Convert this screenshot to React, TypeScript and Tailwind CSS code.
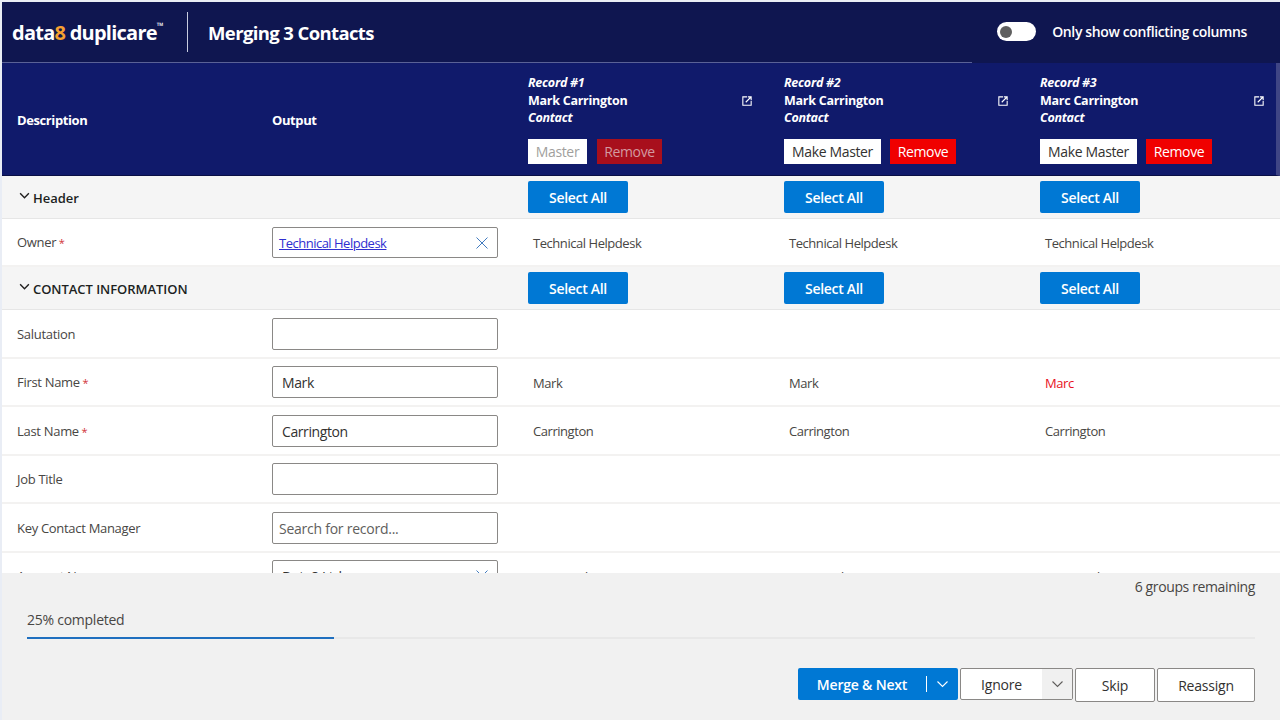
import React from "react";

const font = "font-['Open_Sans','Noto_Sans',sans-serif]";

function Chevron({ className, w = 1.1 }: { className?: string; w?: number }) {
  return (
    <svg viewBox="0 0 12 8" className={className} fill="none" stroke="currentColor" strokeWidth={w}>
      <path d="M1 1.5 L6 6.5 L11 1.5" />
    </svg>
  );
}

function ExternalIcon() {
  return (
    <svg viewBox="0 0 12 12" className="w-[10px] h-[10px] text-white" fill="none" stroke="currentColor" strokeWidth="1.3">
      <path d="M6 1 H1 V11 H11 V6" />
      <path d="M4.5 7.5 L10.5 1.5 M7 1 H11 V5" />
    </svg>
  );
}

const grid = "grid grid-cols-[256px_256px_256px_256px_1fr] pl-[14px]";

function Input({ value, placeholder, link, clear }: { value?: string; placeholder?: string; link?: boolean; clear?: boolean }) {
  return (
    <div className={`w-[226px] ${link ? "h-[31px] mt-[1px]" : "h-[32px]"} border border-[#8a8886] rounded-[2px] bg-white flex items-center justify-between pl-[6px] pr-[9px] text-[14px] text-[#323130] overflow-hidden`}>
      {link ? (
        <span className="text-[13px] text-[#2f2fd0] underline tracking-[-0.5px] mt-[2px]">{value}</span>
      ) : placeholder ? (
        <span className="text-[#605e5c] tracking-[-0.25px] mt-[1px]">{placeholder}</span>
      ) : (
        <span className="tracking-[-0.4px] pl-[3px] mt-[1px]">{value}</span>
      )}
      {clear && (
        <svg viewBox="0 0 12 12" className="w-[12px] h-[12px] text-[#2b6cb8] shrink-0" fill="none" stroke="currentColor" strokeWidth="0.9">
          <path d="M0.5 0.5 L11.5 11.5 M11.5 0.5 L0.5 11.5" />
        </svg>
      )}
    </div>
  );
}

function Row({ label, required, input, vals, h, red }: { label: string; required?: boolean; input: React.ReactNode; vals?: string[]; h: string; red?: boolean }) {
  return (
    <div className={`${grid} ${h} items-center border-b-2 border-[#f3f2f1] bg-white text-[13px] text-[#484644]`}>
      <div className="pt-[2px] pl-[1px] tracking-[-0.3px]">
        {label}
        {required && <span className="text-[11px] text-[#d13438]"> *</span>}
      </div>
      <div>{input}</div>
      {(vals ?? ["", "", ""]).map((v, i) => (
        <div key={i} className={`pl-[5px] pt-[3px] tracking-[-0.45px] ${red && i === 2 ? "text-[#e81123]" : ""}`}>
          {v}
        </div>
      ))}
    </div>
  );
}

function SelectAll() {
  return (
    <button className="w-[100px] h-[32px] rounded-[2px] bg-[#0078d4] text-white text-[14px] font-semibold tracking-[-0.3px]">Select All</button>
  );
}

function Group({ title, h }: { title: string; h: string }) {
  return (
    <div className={`${grid} ${h} items-center border-b border-[#e6e6e6] bg-[#f5f5f5]`}>
      <div className="col-span-2 flex items-center gap-[3px] pl-[3px] text-[13px] font-semibold text-[#201f1e] tracking-[-0.05px]">
        <Chevron w={1.6} className="w-[11px] h-[7px] text-[#201f1e] -mt-[3px]" />
        <span className="pt-[3px]">{title}</span>
      </div>
      <div><SelectAll /></div>
      <div><SelectAll /></div>
      <div><SelectAll /></div>
    </div>
  );
}

function RecordHead({ n, name, master }: { n: number; name: string; master?: boolean }) {
  return (
    <div className="relative h-full pt-[11px]">
      <div className="text-[12.5px] leading-[17.5px] font-bold text-white tracking-[-0.26px]">
        <div className="italic">Record #{n}</div>
        <div>{name}</div>
        <div className="italic">Contact</div>
      </div>
      <div className="absolute left-[214px] top-[33px]"><ExternalIcon /></div>
      {master ? (
        <div className="flex gap-[10px] mt-[12px] text-[14px] tracking-[-0.35px]">
          <div className="w-[59px] h-[25px] bg-white text-[#a19f9d] flex items-center justify-center pt-[1px]">Master</div>
          <div className="w-[65px] h-[25px] bg-[#a80f1c] text-[#d39aa0] flex items-center justify-center pt-[1px]">Remove</div>
        </div>
      ) : (
        <div className="flex gap-[9px] mt-[12px] text-[14px] tracking-[-0.35px]">
          <div className="w-[97px] h-[25px] bg-white text-[#323130] flex items-center justify-center pt-[1px]">Make Master</div>
          <div className="w-[66px] h-[25px] bg-[#f00000] text-white flex items-center justify-center pt-[1px]">Remove</div>
        </div>
      )}
    </div>
  );
}

export default function App() {
  return (
    <div className={`${font} w-[1280px] h-[720px] flex flex-col overflow-hidden bg-[#e9edf5] pt-[2px] pl-[2px]`}>
      <header className="h-[61px] shrink-0 bg-[#0f1650] flex items-center justify-between text-white relative">
        <div className="flex items-center">
          <div className="pl-[10px] w-[185px] text-[20px] font-bold tracking-[-0.75px] whitespace-nowrap flex items-start">
            <span>data<span className="text-[#f5a030]">8</span> duplicare</span>
            <span className="text-[9px] leading-[16px] font-bold">™</span>
          </div>
          <div className="w-[1px] h-[40px] bg-[#c8cce0] -mt-[2px]" />
          <div className="pl-[20px] text-[18.5px] font-bold tracking-[-0.62px] whitespace-nowrap">Merging 3 Contacts</div>
        </div>
        <div className="flex items-center pr-[33px] -mt-[2px]">
          <div className="w-[39px] h-[19px] rounded-full bg-white flex items-center pl-[3px]">
            <div className="w-[12px] h-[12px] rounded-full bg-[#5f5f5f]" />
          </div>
          <span className="ml-[16px] text-[14px] font-semibold tracking-[-0.37px]">Only show conflicting columns</span>
        </div>
        <div className="absolute left-0 bottom-0 w-[970px] h-[1px] bg-[#5a6196]" />
      </header>

      <div className={`${grid} h-[113px] shrink-0 bg-[#101a6b] text-white border-b border-[#0a0f45] items-center border-r-4 border-r-[#3f4585]`}>
        <div className="text-[13px] font-bold tracking-[-0.4px] pt-[3px] pl-[1px]">Description</div>
        <div className="text-[13px] font-bold tracking-[-0.4px] pt-[3px]">Output</div>
        <RecordHead n={1} name="Mark Carrington" master />
        <RecordHead n={2} name="Mark Carrington" />
        <RecordHead n={3} name="Marc Carrington" />
      </div>

      <main className="flex-1 min-h-0 overflow-hidden">
        <Group title="Header" h="h-[43px]" />
        <Row h="h-[48px]" label="Owner" required input={<Input value="Technical Helpdesk" link clear />} vals={["Technical Helpdesk", "Technical Helpdesk", "Technical Helpdesk"]} />
        <Group title="CONTACT INFORMATION" h="h-[43px]" />
        <Row h="h-[49px]" label="Salutation" input={<Input />} />
        <Row h="h-[48px]" label="First Name" required input={<Input value="Mark" />} vals={["Mark", "Mark", "Marc"]} red />
        <Row h="h-[49px]" label="Last Name" required input={<Input value="Carrington" />} vals={["Carrington", "Carrington", "Carrington"]} />
        <Row h="h-[48px]" label="Job Title" input={<Input />} />
        <Row h="h-[49px]" label="Key Contact Manager" input={<Input placeholder="Search for record..." />} />
        <Row h="h-[48px]" label="Account Name" input={<Input value="Data8 Ltd" clear />} vals={["Data8 Ltd", "Data8 Ltd", "Data8 Ltd"]} />
      </main>

      <footer className="h-[147px] shrink-0 bg-[#f1f1f1] relative text-[#484644]">
        <div className="pt-[4px] pr-[25px] text-right text-[14px] tracking-[-0.37px] leading-[20px]">6 groups remaining</div>
        <div className="mt-[13px] pl-[25px] text-[14px] tracking-[-0.25px] leading-[20px]">25% completed</div>
        <div className="mt-[7px] ml-[25px] mr-[25px] h-[2px] bg-[#e8e8e8]">
          <div className="h-[2px] w-[307px] bg-[#1f6fbf]" />
        </div>
        <div className="mt-[29px] pr-[25px] flex justify-end items-start gap-[2px] text-[14px] tracking-[-0.2px]">
          <div className="w-[160px] h-[32px] rounded-[2px] bg-[#0078d4] text-white font-semibold flex items-center">
            <span className="w-[128px] text-center">Merge &amp; Next</span>
            <span className="w-[1px] h-[16px] bg-white" />
            <Chevron className="ml-[9px] w-[13px] h-[8px]" />
          </div>
          <div className="w-[113px] h-[32px] rounded-[2px] border border-[#8a8886] bg-white text-[#323130] flex items-center overflow-hidden">
            <span className="w-[81px] text-center">Ignore</span>
            <span className="w-[30px] h-full bg-[#f0f0f0] flex items-center justify-center text-[#605e5c]"><Chevron className="w-[13px] h-[8px]" /></span>
          </div>
          <div className="w-[80px] h-[34px] rounded-[2px] border border-[#8a8886] bg-white text-[#323130] flex items-center justify-center">Skip</div>
          <div className="w-[98px] h-[34px] rounded-[2px] border border-[#8a8886] bg-white text-[#323130] flex items-center justify-center">Reassign</div>
        </div>
      </footer>
    </div>
  );
}
